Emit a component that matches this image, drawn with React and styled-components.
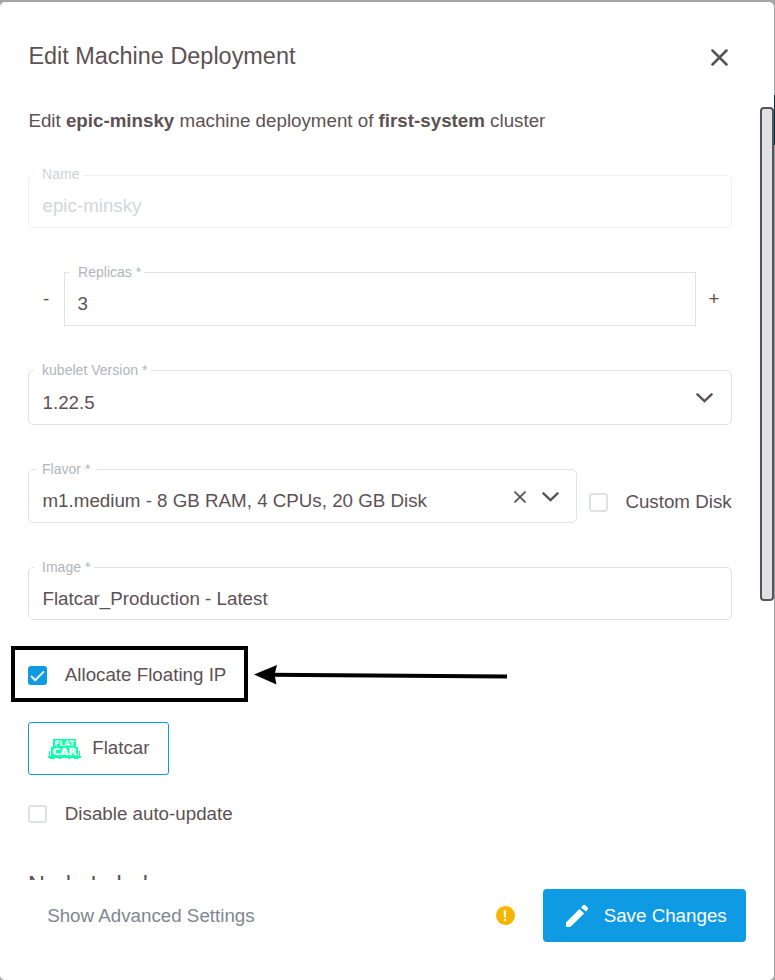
import React from "react";
import styled, { createGlobalStyle } from "styled-components";

const INK = "#5c5255";
const BLUE = "#0f9be3";
const LINE = "#dfe2e5";

const GlobalStyle = createGlobalStyle`
  * { box-sizing: border-box; }
  body {
    margin: 0;
    background: #a6a6a6;
    font-family: "Liberation Sans", Arial, sans-serif;
    font-size: 18.75px;
    line-height: 24px;
    color: ${INK};
    overflow: hidden;
  }
`;

const Page = styled.div`
  display: grid;
  grid-template-columns: 774px 1px;
  height: 980px;
`;

const Dialog = styled.main`
  position: relative;
  display: flex;
  flex-direction: column;
  margin-top: 2px;
  height: 978px;
  background: #fff;
  border-radius: 5px;
`;

const PageEdge = styled.div`
  display: flex;
  flex-direction: column;
`;

const EdgeBand = styled.div`
  height: ${(p) => p.$height}px;
  background: ${(p) => p.$color};
`;

const Header = styled.header`
  flex: none;
  display: flex;
  justify-content: space-between;
  align-items: flex-start;
  height: 105px;
  padding: 39px 46px 0 28.4px;
`;

const Title = styled.h1`
  margin: 0;
  font-size: 23.44px;
  line-height: 30px;
  font-weight: 400;
`;

const IconButton = styled.button`
  display: flex;
  padding: 0;
  border: 0;
  background: none;
  color: ${INK};
  margin-top: ${(p) => p.$top || 0}px;
`;

const Body = styled.div`
  flex: none;
  display: flex;
  height: 773px;
  overflow: hidden;
`;

const Content = styled.div`
  width: 760px;
  padding: 2px 28px 0;
`;

const ScrollThumb = styled.div`
  width: 14px;
  height: 494px;
  border: 2px solid ${INK};
  border-radius: 4px;
  background: #dee2e5;
`;

const Intro = styled.p`
  margin: 0;
  padding-left: 0.4px;
`;

const Row = styled.div`
  display: flex;
  margin-top: ${(p) => p.$gap}px;
`;

const Field = styled.fieldset`
  position: relative;
  display: flex;
  align-items: flex-start;
  flex: ${(p) => (p.$width ? "none" : "1")};
  width: ${(p) => (p.$width ? `${p.$width}px` : "auto")};
  min-width: 0;
  height: ${(p) => p.$height}px;
  margin: 0;
  padding: 0 ${(p) => p.$end || 18}px 0 ${(p) => p.$notch || 5}px;
  border: 1px solid ${(p) => (p.$disabled ? "#eff0f2" : LINE)};
  border-radius: ${(p) => (p.$square ? 0 : 5)}px;
  color: ${(p) => (p.$disabled ? "#d3d6da" : INK)};
`;

const Legend = styled.legend`
  height: 1px;
  padding: 0 ${(p) => p.$right || 4}px 0 ${(p) => p.$left || 8}px;
  font-size: 14.06px;
  line-height: 1px;
  color: ${(p) => (p.$disabled ? "#cfd3d8" : "#b2b5bb")};
`;

const LegendText = styled.span`
  display: block;
  margin-top: ${(p) => (p.$raised ? -1 : 0)}px;
`;

const Value = styled.span`
  flex: 1;
  padding: ${(p) => p.$top || 19}px 0 0 ${(p) => (p.$square ? 8.6 : (p.$left || 8) + 0.5)}px;
  white-space: nowrap;
`;

const FieldIcons = styled.span`
  display: flex;
  align-items: center;
  gap: 16px;
  margin-top: ${(p) => p.$top}px;
`;

const Stepper = styled.button`
  width: 36px;
  padding: 0;
  border: 0;
  background: none;
  color: ${INK};
  font: inherit;
`;

const Check = styled.label`
  display: flex;
  align-items: center;
  gap: ${(p) => p.$gap || 17.8}px;
  height: 24px;
  margin: ${(p) => p.$margin || 0};
  white-space: nowrap;
`;

const Box = styled.span`
  display: flex;
  align-items: center;
  justify-content: center;
  width: 19px;
  height: ${(p) => p.$height || 19}px;
  margin-top: ${(p) => p.$drop || 0}px;
  border: 2px solid ${(p) => (p.$on ? BLUE : LINE)};
  border-radius: 3px;
  background: ${(p) => (p.$on ? BLUE : "#fff")};
`;

const OsButton = styled.button`
  display: flex;
  align-items: center;
  gap: 11.2px;
  width: 141px;
  height: 53px;
  margin-top: 35px;
  padding: 0 0 2px 19px;
  border: 1px solid ${BLUE};
  border-radius: 3px;
  background: #fff;
  color: ${INK};
  font: inherit;
`;

const SectionTitle = styled.h2`
  margin: 44px 0 0;
  font-size: 23.44px;
  line-height: 30px;
  font-weight: 400;
`;

const Footer = styled.footer`
  display: flex;
  align-items: center;
  height: 71px;
  padding: 0 28px 0 47.2px;
`;

const Advanced = styled.span`
  flex: 1;
  color: #7e8790;
`;

const SaveButton = styled.button`
  display: flex;
  align-items: center;
  gap: 14.7px;
  width: 203px;
  height: 53px;
  margin-left: 28px;
  padding: 0 0 0 22px;
  border: 0;
  border-radius: 4px;
  background: ${BLUE};
  color: #fff;
  font: inherit;
`;

const Highlight = styled.div`
  position: absolute;
  left: 11px;
  top: 643.5px;
  width: 237px;
  height: 56.5px;
  border: 4px solid #000;
`;

const Arrow = styled.svg`
  position: absolute;
  left: 250px;
  top: 658px;
`;

const Cross = ({ size, stroke }) => (
  <svg width={size} height={size} viewBox="0 0 16 16">
    <path d="M1.4 1.4 14.6 14.6M14.6 1.4 1.4 14.6" stroke="currentColor" strokeWidth={stroke} strokeLinecap="round" fill="none" />
  </svg>
);

const Chevron = () => (
  <svg width="17" height="10" viewBox="0 0 17 10">
    <path d="M1.4 1.3 8.5 8.1 15.6 1.3" stroke={INK} strokeWidth="2.4" strokeLinecap="round" fill="none" />
  </svg>
);

const LogoSvg = styled.svg`
  margin-top: 4px;
`;

const FlatcarLogo = () => (
  <LogoSvg width="33" height="21" viewBox="0 0 33 21" shapeRendering="crispEdges">
    <g fill="#0cffa9">
      <path d="M5 0H28V8H30V17H3V8H5Z" />
      <path d="M1 12H2V17H1ZM31 12H32V17H31ZM0 17H33V19H0ZM2 19H7V20H2ZM11 19H13V20H11ZM20 19H22V20H20ZM26 19H31V20H26Z" />
    </g>
    <g fill="#fff" fontFamily="DejaVu Sans" fontWeight="700">
      <text x="6.5" y="7" fontSize="7.4" textLength="20" lengthAdjust="spacingAndGlyphs">FLAT</text>
      <text x="4.5" y="16" fontSize="9.4" stroke="#fff" strokeWidth=".35" textLength="24" lengthAdjust="spacingAndGlyphs">CAR</text>
    </g>
  </LogoSvg>
);

const Warning = () => (
  <svg width="19" height="19" viewBox="0 0 19 19">
    <circle cx="9.5" cy="9.5" r="9.5" fill="#f8b500" />
    <path d="M7.6 4.2H10.1L9.8 11.4H8Z" fill="#fff" />
    <circle cx="8.9" cy="14" r="1.3" fill="#fff" />
  </svg>
);

const Pencil = () => (
  <svg width="24" height="24" viewBox="0 0 24 24" fill="#fff">
    <path d="M1 18.4 14.4 5 19.2 9.4 5.8 22.6Q5.4 23 4.8 23H2Q1 23 1 22Z" />
    <path d="M16.1 3.5 18 1.3Q19 .2 20.3 1.3L22.6 3.6Q23.6 4.7 22.6 5.8L20.9 7.6Z" />
  </svg>
);

function TextField({ label, value, height, disabled, square, width, notch, end, legendRight, legendLeft, top, children }) {
  return (
    <Field $height={height} $disabled={disabled} $square={square} $width={width} $notch={notch} $end={end}>
      <Legend $disabled={disabled} $right={legendRight} $left={legendLeft}>
        <LegendText $raised={disabled}>{label}</LegendText>
      </Legend>
      <Value $top={top} $left={legendLeft} $square={square}>{value}</Value>
      {children}
    </Field>
  );
}

export default function App() {
  return (
    <>
      <GlobalStyle />
      <Page>
        <Dialog>
          <Header>
            <Title>Edit Machine Deployment</Title>
            <IconButton $top={8} aria-label="Close"><Cross size={17} stroke={2.4} /></IconButton>
          </Header>
          <Body>
            <Content>
              <Intro>
                Edit <b>epic-minsky</b> machine deployment of <b>first-system</b> cluster
              </Intro>
              <Row $gap={42}>
                <TextField label="Name" value="epic-minsky" height={53} top={18} disabled />
              </Row>
              <Row $gap={44}>
                <Stepper>-</Stepper>
                <TextField label="Replicas *" value="3" height={54} square notch={4} legendLeft={9} legendRight={3} />
                <Stepper>+</Stepper>
              </Row>
              <Row $gap={44}>
                <TextField label="kubelet Version *" value="1.22.5" height={55} top={20}>
                  <FieldIcons $top={22}><Chevron /></FieldIcons>
                </TextField>
              </Row>
              <Row $gap={44}>
                <TextField label="Flavor *" value="m1.medium - 8 GB RAM, 4 CPUs, 20 GB Disk" height={54} width={549} notch={8} end={17} legendLeft={5} legendRight={7}>
                  <FieldIcons $top={20}>
                    <IconButton $top={1} aria-label="Clear"><Cross size={12} stroke={2.4} /></IconButton>
                    <Chevron />
                  </FieldIcons>
                </TextField>
                <Check $margin="21px 0 0 12px" $gap={17.4}><Box $drop={1} />Custom Disk</Check>
              </Row>
              <Row $gap={44}>
                <TextField label="Image *" value="Flatcar_Production - Latest" height={53} />
              </Row>
              <Check $margin="43px 0 0"><Box $on $drop={1}>
                <svg width="15" height="12" viewBox="0 0 15 12" fill="none" stroke="#fff" strokeWidth="1.8">
                  <path d="M1 6 5.2 10.2 14 1.3" />
                </svg>
              </Box>Allocate Floating IP</Check>
              <OsButton><FlatcarLogo />Flatcar</OsButton>
              <Check $margin="27px 0 0"><Box $height={18} />Disable auto-update</Check>
              <SectionTitle>Node Labels</SectionTitle>
            </Content>
            <ScrollThumb />
          </Body>
          <Footer>
            <Advanced>Show Advanced Settings</Advanced>
            <Warning />
            <SaveButton><Pencil />Save Changes</SaveButton>
          </Footer>
          <Highlight />
          <Arrow width="262" height="30" viewBox="0 0 262 30">
            <path d="M20 14.8 257 16.6" stroke="#000" strokeWidth="4" />
            <path d="M4 14.5 27 5 24.5 14.8 26.5 24.5Z" />
          </Arrow>
        </Dialog>
        <PageEdge>
          <EdgeBand $height={95} $color="#a6a6a6" />
          <EdgeBand $height={50} $color="#002b49" />
          <EdgeBand $height={835} $color="#a0a0a0" />
        </PageEdge>
      </Page>
    </>
  );
}
